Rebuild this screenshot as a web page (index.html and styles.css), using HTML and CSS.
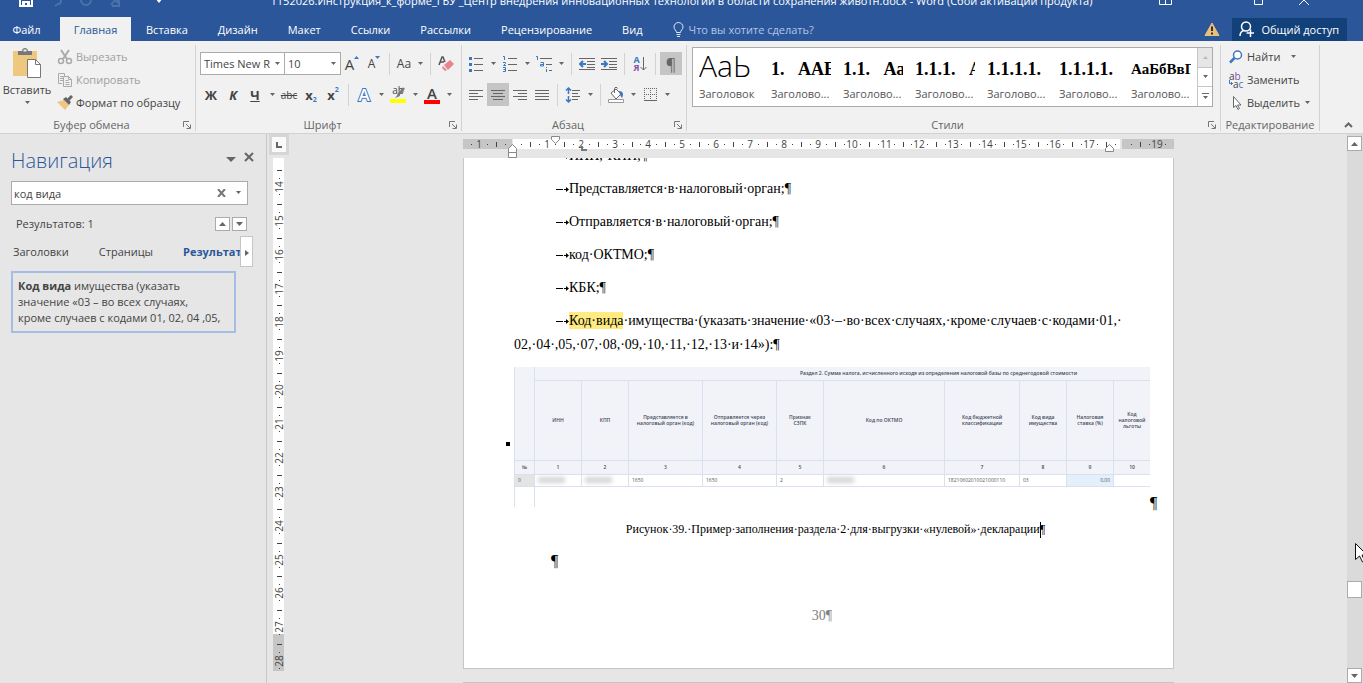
FILE: index.html
```
<!DOCTYPE html>
<html lang="ru">
<head>
  <meta charset="UTF-8" />
  <meta name="viewport" content="width=device-width, initial-scale=1.0"/>
  <title>Word</title>
  <link rel="stylesheet" href="styles.css">
</head>
<body>

  <!-- shared glyphs -->
  <svg class="defs" aria-hidden="true">
    <symbol id="down" viewBox="0 0 7 4"><path d="M1 0h5L3.500 3z" fill="#666"/></symbol>
    <symbol id="launch" viewBox="0 0 8 8"><path d="M.5 6V.5H6M3 3l4 4M7.500 3.500v4h-4" fill="none" stroke="#777"/></symbol>
    <symbol id="dash" viewBox="0 0 13 6"><path d="M0 3.500h7M8 3.500h3" stroke="#000"/><path d="M10 1l3 2.500L10 6z" fill="#000"/></symbol>
  </svg>

  <header>
    <div class="titlebar">
      <div class="quick">
        <svg width="14" height="14" viewBox="0 0 14 14"><path d="M1 1h12v12H1z" fill="none" stroke="#fff" stroke-width="2"/><path d="M3 8h8v5H8v-3H6v3H3z" fill="#fff"/></svg>
        <svg width="14" height="14" viewBox="0 0 14 14"><path d="M2 5h7a3 3 0 0 1 0 6l-3 2" fill="none" stroke="#4a72ad" stroke-width="2"/></svg>
        <svg width="14" height="14" viewBox="0 0 14 14"><circle cx="7" cy="7" r="5" fill="none" stroke="#4a72ad" stroke-width="2"/></svg>
        <svg width="14" height="14" viewBox="0 0 14 14"><path d="M2 12l4-5 2 2 4-4M10 8v5M3 13h8" fill="none" stroke="#4a72ad" stroke-width="2"/></svg>
        <svg width="8" height="5" viewBox="0 0 8 5"><path d="M0 0h8L4 5z" fill="#fff"/></svg>
      </div>
      <div class="doc-title">1152026.Инструкция_к_форме_ГБУ _Центр внедрения инновационных технологий в области сохранения животн.docx - Word (Сбой активации продукта)</div>
      <div class="window-buttons">
        <svg width="13" height="9" viewBox="0 0 13 9"><path d="M.5.5h12v8H.5zM6.500 4v4" fill="none" stroke="#fff"/></svg>
        <svg width="10" height="10" viewBox="0 0 10 10"><path d="M0 4h10" stroke="#fff"/></svg>
        <svg width="9" height="9" viewBox="0 0 9 9"><path d="M.5.5h8v8h-8z" fill="none" stroke="#fff"/></svg>
        <svg width="10" height="10" viewBox="0 0 10 10"><path d="M0 0l10 10M10 0L0 10" stroke="#fff"/></svg>
      </div>
    </div>

    <nav class="tabs">
      <button class="tab file">Файл</button>
      <button class="tab active">Главная</button>
      <button class="tab">Вставка</button>
      <button class="tab">Дизайн</button>
      <button class="tab">Макет</button>
      <button class="tab">Ссылки</button>
      <button class="tab">Рассылки</button>
      <button class="tab">Рецензирование</button>
      <button class="tab">Вид</button>
      <button class="tab tell-me">
        <svg width="11" height="15" viewBox="0 0 11 15"><path d="M3.500 10.500C3.500 8.500 1 7.500 1 5a4.500 4.500 0 0 1 9 0c0 2.500-2.500 3.500-2.500 5.500zM3.500 12.500h4M4 14.500h3" fill="none" stroke="#dfe8f5"/></svg>
        Что вы хотите сделать?
      </button>
      <svg class="warning" width="16" height="14" viewBox="0 0 16 14"><path d="M8 1l7 12.500H1z" fill="#e9bf7a" stroke="#e9bf7a" stroke-linejoin="round"/><path d="M8 4.500v4.500M8 10.500v2" stroke="#333" stroke-width="2"/></svg>
      <button class="share">
        <svg width="15" height="16" viewBox="0 0 15 16"><circle cx="7" cy="5.500" r="4.500" fill="none" stroke="#fff" stroke-width="1.500"/><path d="M1 15c0-3 2-5 4-5.500M7.500 12H15M11.500 8.500V16" fill="none" stroke="#fff" stroke-width="1.500"/></svg>
        Общий доступ
      </button>
    </nav>
  </header>

  <section class="ribbon">
    <div class="group clipboard">
      <div class="group-body">
        <button class="paste">
          <svg width="30" height="31" viewBox="0 0 30 31"><path d="M1 3h24v25H1z" fill="#edc87e"/><path d="M6 3h4c0-4 6-4 6 0h4v4H6z" fill="#777"/><path d="M11.500 3.500h3v-2h-3z" fill="#f1f1f1"/><path d="M15.500 11.500h8l5 5v13h-13z" fill="#fff" stroke="#777"/><path d="M23.500 11.500v5h5" fill="none" stroke="#777"/></svg>
          <span>Вставить</span>
          <svg width="7" height="4"><use href="#down"/></svg>
        </button>
        <div class="stack">
          <button class="cmd" disabled>
            <svg width="16" height="16" viewBox="0 0 16 16"><path d="M4 1l6 9M12 1L6 10" stroke="#aaa" stroke-width="2"/><circle cx="4" cy="12" r="2.500" fill="none" stroke="#aaa" stroke-width="1.500"/><circle cx="12" cy="12" r="2.500" fill="none" stroke="#aaa" stroke-width="1.500"/></svg>
            Вырезать
          </button>
          <button class="cmd" disabled>
            <svg width="16" height="16" viewBox="0 0 16 16"><path d="M1.500 1.500h6v3M5 11.500H1.500v-10M3 4.500h3M3 6.500h3M3 8.500h3M6.500 4.500h5l3 3v7h-8zM11.500 4.500v3h3M8.500 8.500h3M8.500 10.500h4M8.500 12.500h4" fill="none" stroke="#aaa"/></svg>
            Копировать
          </button>
          <button class="cmd">
            <svg width="16" height="16" viewBox="0 0 16 16"><path d="M0 7l7-2 5 5-4 5z" fill="#edc87e"/><path d="M6 4l3-2 5 5-2 3z" fill="#666"/><path d="M11 5l4-4" stroke="#666" stroke-width="3"/></svg>
            Формат по образцу
          </button>
        </div>
      </div>
      <div class="group-label"><span>Буфер обмена</span><button aria-label="Буфер обмена: параметры"><svg width="8" height="8"><use href="#launch"/></svg></button></div>
    </div>

    <div class="group font">
      <div class="group-body rows">
        <div class="row">
          <label class="combo font-name"><select aria-label="Шрифт"><option>Times New R</option></select><svg width="7" height="4"><use href="#down"/></svg></label>
          <label class="combo font-size"><select aria-label="Размер"><option>10</option></select><svg width="7" height="4"><use href="#down"/></svg></label>
          <button class="ic" aria-label="Увеличить размер"><span class="big-a">A</span><svg class="tip" width="5" height="3" viewBox="0 0 5 3"><path d="M0 3h5L2.500 0z" fill="#3b78bd"/></svg></button>
          <button class="ic" aria-label="Уменьшить размер"><span class="small-a">A</span><svg class="tip" width="5" height="3" viewBox="0 0 5 3"><path d="M0 0h5L2.500 3z" fill="#3b78bd"/></svg></button>
          <i class="sep"></i>
          <button class="ic case">Aa</button><button class="arr" aria-label="Ещё"><svg width="7" height="4"><use href="#down"/></svg></button>
          <i class="sep"></i>
          <button class="ic" aria-label="Очистить формат"><svg width="16" height="16" viewBox="0 0 16 16"><path d="M1 9l3-8h1l2 5M2 6h4" fill="none" stroke="#555" stroke-width="1.500"/><path d="M6 9l6-5 4 4-6 6z" fill="#e8848f"/><path d="M5 10l4 4-2 1-3-3z" fill="#e8848f"/></svg></button>
        </div>
        <div class="row">
          <button class="ic bold">Ж</button>
          <button class="ic bold italic">К</button>
          <button class="ic bold under">Ч</button><button class="arr" aria-label="Ещё"><svg width="7" height="4"><use href="#down"/></svg></button>
          <button class="ic strike">abc</button>
          <button class="ic bold">x<sub>2</sub></button>
          <button class="ic bold">x<sup>2</sup></button>
          <i class="sep"></i>
          <button class="ic effects">A</button><button class="arr" aria-label="Ещё"><svg width="7" height="4"><use href="#down"/></svg></button>
          <button class="ic mark" aria-label="Цвет выделения"><span>ab</span><svg width="16" height="16" viewBox="0 0 16 16"><path d="M14 1L8 8" stroke="#777" stroke-width="2.500"/><path d="M9 6l-4 5 5-2z" fill="#777"/><path d="M0 12h16v4H0z" fill="#ff0"/></svg></button><button class="arr" aria-label="Ещё"><svg width="7" height="4"><use href="#down"/></svg></button>
          <button class="ic color">A</button><button class="arr" aria-label="Ещё"><svg width="7" height="4"><use href="#down"/></svg></button>
        </div>
      </div>
      <div class="group-label"><span>Шрифт</span><button aria-label="Шрифт: параметры"><svg width="8" height="8"><use href="#launch"/></svg></button></div>
    </div>

    <div class="group paragraph">
      <div class="group-body rows">
        <div class="row">
          <button class="ic" aria-label="Маркеры"><svg width="14" height="16" viewBox="0 0 14 16"><path d="M0 1h3v3H0zM0 7h3v3H0zM0 13h3v3H0z" fill="#3b78bd"/><path d="M5 2.500h9M5 8.500h9M5 14.500h9" stroke="#666"/></svg></button><button class="arr" aria-label="Ещё"><svg width="7" height="4"><use href="#down"/></svg></button>
          <button class="ic" aria-label="Нумерация"><svg width="14" height="16" viewBox="0 0 14 16"><path d="M0 .5h1.500V4M0 6.500h2.500v1L.5 9.500H3M0 11.500h2.500v4H0M.5 13.500h2" fill="none" stroke="#3b78bd"/><path d="M5 2.500h9M5 8.500h9M5 14.500h9" stroke="#666"/></svg></button><button class="arr" aria-label="Ещё"><svg width="7" height="4"><use href="#down"/></svg></button>
          <button class="ic" aria-label="Многоуровневый список"><svg width="16" height="16" viewBox="0 0 16 16"><path d="M0 .5h1.500V4M4.500 6.500h3V10h-3V8.500h3M10.500 11v1M10.500 13v3" fill="none" stroke="#3b78bd"/><path d="M4 2.500h12M10 8.500h6M13 14.500h3" stroke="#666"/></svg></button><button class="arr" aria-label="Ещё"><svg width="7" height="4"><use href="#down"/></svg></button>
          <i class="sep"></i>
          <button class="ic" aria-label="Уменьшить отступ"><svg width="16" height="14" viewBox="0 0 16 14"><path d="M0 1.500h16M8 4.500h8M8 7.500h8M8 10.500h8M0 12.500h16" stroke="#666"/><path d="M7 7H1M4 4L1 7l3 3" fill="none" stroke="#3b78bd" stroke-width="2"/></svg></button>
          <button class="ic" aria-label="Увеличить отступ"><svg width="16" height="14" viewBox="0 0 16 14"><path d="M0 1.500h16M8 4.500h8M8 7.500h8M8 10.500h8M0 12.500h16" stroke="#666"/><path d="M0 7h6M3 4l3 3-3 3" fill="none" stroke="#3b78bd" stroke-width="2"/></svg></button>
          <i class="sep"></i>
          <button class="ic sort" aria-label="Сортировка"><span><b>А</b><b>Я</b></span><svg width="7" height="16" viewBox="0 0 7 16"><path d="M3.500 1v13M.5 11l3 3 3-3" fill="none" stroke="#666"/></svg></button>
          <i class="sep"></i>
          <button class="ic on pilcrow">¶</button>
        </div>
        <div class="row">
          <button class="ic" aria-label="По левому краю"><svg width="14" height="12" viewBox="0 0 14 12"><path d="M0 1.500h14M0 4.500h9M0 7.500h14M0 10.500h9" stroke="#666"/></svg></button>
          <button class="ic on" aria-label="По центру"><svg width="14" height="12" viewBox="0 0 14 12"><path d="M0 1.500h14M2 4.500h10M0 7.500h14M2 10.500h10" stroke="#666"/></svg></button>
          <button class="ic" aria-label="По правому краю"><svg width="14" height="12" viewBox="0 0 14 12"><path d="M0 1.500h14M5 4.500h9M0 7.500h14M5 10.500h9" stroke="#666"/></svg></button>
          <button class="ic" aria-label="По ширине"><svg width="14" height="12" viewBox="0 0 14 12"><path d="M0 1.500h14M0 4.500h14M0 7.500h14M0 10.500h14" stroke="#666"/></svg></button>
          <i class="sep"></i>
          <button class="ic" aria-label="Интервал"><svg width="16" height="16" viewBox="0 0 16 16"><path d="M3.500 1v6M1 3.500L3.500 1 6 3.500M3.500 9v6M1 12.500L3.500 15 6 12.500" fill="none" stroke="#3b78bd" stroke-width="1.500"/><path d="M7 3.500h8M7 6.500h6M7 9.500h8M7 12.500h6" stroke="#666"/></svg></button><button class="arr" aria-label="Ещё"><svg width="7" height="4"><use href="#down"/></svg></button>
          <i class="sep"></i>
          <button class="ic" aria-label="Заливка"><svg width="18" height="16" viewBox="0 0 18 16"><path d="M4 6l5-4 5 5-5 5z" fill="#fff" stroke="#666"/><path d="M7.500 6V1.500c0-1.500 3-1.500 3 0" fill="none" stroke="#666"/><path d="M12 4c4 0 5 3 3 7l-2-3z" fill="#3b78bd"/><path d="M1.500 12.500h15v3h-15z" fill="#fff" stroke="#999"/></svg></button><button class="arr" aria-label="Ещё"><svg width="7" height="4"><use href="#down"/></svg></button>
          <button class="ic" aria-label="Границы"><svg width="13" height="14" viewBox="0 0 13 14"><path d="M0 .5h13M0 6.500h13M.5 0v12M6.500 0v12M12.500 0v12" stroke="#666" stroke-dasharray="1 1"/><path d="M0 12.500h13" stroke="#666"/></svg></button><button class="arr" aria-label="Ещё"><svg width="7" height="4"><use href="#down"/></svg></button>
        </div>
      </div>
      <div class="group-label"><span>Абзац</span><button aria-label="Абзац: параметры"><svg width="8" height="8"><use href="#launch"/></svg></button></div>
    </div>

    <div class="group styles">
      <div class="group-body">
        <div class="gallery">
          <div class="gallery-items">
            <button class="style"><span class="sample light">АаЬ</span><span>Заголовок</span></button>
            <button class="style"><span class="sample">1.&nbsp;&nbsp; ААБ</span><span>Заголово...</span></button>
            <button class="style"><span class="sample">1.1.&nbsp;&nbsp; Аа</span><span>Заголово...</span></button>
            <button class="style"><span class="sample">1.1.1.&nbsp;&nbsp; А</span><span>Заголово...</span></button>
            <button class="style"><span class="sample">1.1.1.1.</span><span>Заголово...</span></button>
            <button class="style"><span class="sample">1.1.1.1.</span><span>Заголово...</span></button>
            <button class="style"><span class="sample normal">АаБбВвГ</span><span>Заголово...</span></button>
          </div>
          <div class="gallery-scroll">
            <button disabled aria-label="Вверх"><svg width="5" height="3" viewBox="0 0 5 3"><path d="M0 3h5L2.500 0z" fill="#bbb"/></svg></button>
            <button aria-label="Вниз"><svg width="7" height="4"><use href="#down"/></svg></button>
            <button aria-label="Все стили"><svg width="7" height="7" viewBox="0 0 7 7"><path d="M0 .5h7" stroke="#666"/><path d="M1 3h5L3.500 6z" fill="#666"/></svg></button>
          </div>
        </div>
      </div>
      <div class="group-label"><span>Стили</span><button aria-label="Стили: параметры"><svg width="8" height="8"><use href="#launch"/></svg></button></div>
    </div>

    <div class="group editing">
      <div class="group-body stack">
        <button class="cmd">
          <svg width="14" height="14" viewBox="0 0 14 14"><circle cx="8.500" cy="5" r="4" fill="#fff" stroke="#3b78bd" stroke-width="1.500"/><path d="M5.500 8L1 12.500" stroke="#3b78bd" stroke-width="2.500"/></svg>
          Найти <svg class="far" width="7" height="4"><use href="#down"/></svg>
        </button>
        <button class="cmd">
          <span class="replace"><span>a<b>b</b></span><span><svg width="4" height="6" viewBox="0 0 4 6"><path d="M.5 0v3.500H4M2 2l1.500 1.500L2 5" fill="none" stroke="#3b78bd"/></svg>a<em>c</em></span></span>
          Заменить
        </button>
        <button class="cmd">
          <svg width="14" height="14" viewBox="0 0 14 14"><path d="M4.500.5v11l2.500-2 2 4 1.500-1-2-3.500H12z" fill="#fff" stroke="#666"/></svg>
          Выделить<svg width="7" height="4"><use href="#down"/></svg>
        </button>
      </div>
      <div class="group-label"><span>Редактирование</span></div>
    </div>

    <button class="collapse" aria-label="Свернуть ленту"><svg width="9" height="6" viewBox="0 0 9 6"><path d="M1 5l3.500-3.500L8 5" fill="none" stroke="#666" stroke-width="2"/></svg></button>
  </section>

  <main>
    <aside class="navigation">
      <div class="nav-head">
        <h2>Навигация</h2>
        <button aria-label="Параметры"><svg width="10" height="5" viewBox="0 0 10 5"><path d="M0 0h10L5 5z" fill="#666"/></svg></button>
        <button aria-label="Закрыть"><svg width="10" height="10" viewBox="0 0 10 10"><path d="M1 1l8 8M9 1L1 9" stroke="#666" stroke-width="2"/></svg></button>
      </div>
      <div class="search">
        <input type="text" aria-label="Поиск в документе" value="код вида">
        <button aria-label="Очистить"><svg width="9" height="8" viewBox="0 0 9 8"><path d="M1 0l7 8M8 0L1 8" stroke="#777" stroke-width="2"/></svg></button>
        <button aria-label="Параметры поиска"><svg width="7" height="4"><use href="#down"/></svg></button>
      </div>
      <div class="results">
        <span>Результатов: 1</span>
        <button aria-label="Предыдущий"><svg width="7" height="4" viewBox="0 0 7 4"><path d="M0 4h7L3.500 0z" fill="#666"/></svg></button>
        <button aria-label="Следующий"><svg width="7" height="4" viewBox="0 0 7 4"><path d="M0 0h7L3.500 4z" fill="#666"/></svg></button>
      </div>
      <div class="nav-tabs">
        <button>Заголовки</button>
        <button>Страницы</button>
        <button class="current">Результаты</button>
        <button class="more" aria-label="Далее"><svg width="4" height="6" viewBox="0 0 4 6"><path d="M0 0v6l4-3z" fill="#666"/></svg></button>
      </div>
      <a class="hit" href="#hit"><b>Код вида</b> имущества (указать<br>значение «03 – во всех случаях,<br>кроме случаев с кодами 01, 02, 04 ,05,</a>
    </aside>

    <div class="v-ruler">
      <button class="tab-kind" aria-label="Табуляция"><svg width="6" height="6" viewBox="0 0 6 6"><path d="M1 0v5h5" fill="none" stroke="#666" stroke-width="2"/></svg></button>
      <svg id="vRuler" width="11" height="513"></svg>
    </div>

    <div class="document">
      <div class="h-ruler">
        <svg id="hRuler" width="711" height="24"></svg>
      </div>
      <div class="pages">
        <article class="page">
          <p class="item"><svg class="dash" width="13" height="6"><use href="#dash"/></svg>ИНН,·КПП;¶</p>
          <p class="item"><svg class="dash" width="13" height="6"><use href="#dash"/></svg>Представляется·в·налоговый·орган;¶</p>
          <p class="item"><svg class="dash" width="13" height="6"><use href="#dash"/></svg>Отправляется·в·налоговый·орган;¶</p>
          <p class="item"><svg class="dash" width="13" height="6"><use href="#dash"/></svg>код·ОКТМО;¶</p>
          <p class="item"><svg class="dash" width="13" height="6"><use href="#dash"/></svg>КБК;¶</p>
          <p class="item" id="hit"><svg class="dash" width="13" height="6"><use href="#dash"/></svg><mark>Код·вида</mark>·имущества·(указать·значение·«03·–·во·всех·случаях,·кроме·случаев·с·кодами·01,·<br>02,·04·,05,·07,·08,·09,·10,·11,·12,·13·и·14»):¶</p>

          <div class="figure">
            <i class="anchor"></i>
            <table>
              <colgroup>
                <col class="c20"><col class="c47"><col class="c47"><col class="c74"><col class="c74"><col class="c47"><col class="c121"><col class="c75"><col class="c47"><col class="c47"><col>
              </colgroup>
              <thead>
                <tr class="top"><th rowspan="2"></th><th colspan="10">Раздел 2. Сумма налога, исчисленного исходя из определения налоговой базы по среднегодовой стоимости</th></tr>
                <tr class="names"><th>ИНН</th><th>КПП</th><th>Представляется в<br>налоговый орган (код)</th><th>Отправляется через<br>налоговый орган (код)</th><th>Признак<br>СЗПК</th><th>Код по ОКТМО</th><th>Код бюджетной<br>классификации</th><th>Код вида<br>имущества</th><th>Налоговая<br>ставка (%)</th><th>Код<br>налоговой<br>льготы</th></tr>
                <tr class="nums"><th>№</th><th>1</th><th>2</th><th>3</th><th>4</th><th>5</th><th>6</th><th>7</th><th>8</th><th>9</th><th>10</th></tr>
              </thead>
              <tbody>
                <tr><td class="index">0</td><td><i class="smudge"></i></td><td><i class="smudge"></i></td><td>1650</td><td>1650</td><td>2</td><td><i class="smudge"></i></td><td>18210602010021000110</td><td>03</td><td class="rate">0,00</td><td></td></tr>
                <tr class="rest"><td></td><td colspan="10"></td></tr>
              </tbody>
            </table>
            <span>¶</span>
          </div>

          <p class="caption">Рисунок·39.·Пример·заполнения·раздела·2·для·выгрузки·«нулевой»·декларации<i class="caret"></i>¶</p>
          <p class="blank">¶</p>
          <footer>30¶</footer>
        </article>
        <article class="page next"></article>
      </div>
    </div>

    <div class="scrollbar">
      <button aria-label="Вверх"><svg width="7" height="4" viewBox="0 0 7 4"><path d="M0 4h7L3.500 0z" fill="#666"/></svg></button>
      <div class="before"></div>
      <button class="thumb" aria-label="Прокрутка"></button>
      <div class="after"></div>
      <button aria-label="Вниз"><svg width="7" height="4" viewBox="0 0 7 4"><path d="M0 0h7L3.500 4z" fill="#666"/></svg></button>
    </div>
  </main>

  <svg class="pointer" width="12" height="20" viewBox="0 0 12 20"><path d="M.5.5v16l4-3.500 3 6 2-1-2.500-6H12z" fill="#fff" stroke="#111"/></svg>

  <script>
    const CM = 33.87;

    // one centimetre of marks: number, two dots, half tick
    function marks(n, at, hidden) {
      const x = Math.round(at);
      const dot = Math.round(CM / 4);
      const half = Math.round(CM / 2);
      let out = hidden ? "" : `<text x="${x}" y="0">${Math.abs(n)}</text>`;
      out += `<path d="M${x - dot} -3.500h1M${x + dot} -3.500h1" stroke-width="1"/>`;
      out += `<path d="M${x + half}.5 -6v5"/>`;
      return out;
    }

    function drawHorizontal() {
      let html = `<rect x="0" y="5" width="49" height="10" fill="#c6c6c6"/>
        <rect x="50" y="5" width="607" height="10" fill="#fff"/>
        <rect x="659" y="5" width="52" height="10" fill="#c6c6c6"/>
        <g transform="translate(0 14)">`;
      for (let n = -2; n <= 19; n++) {
        html += marks(n, 50 + n * CM, n === 0 || n === 18 || n === -2);
      }
      html += `</g>
        <path d="M88.500 2.500h8v3l-4 4-4-4z" fill="#fff" stroke="#888"/>
        <path d="M45.500 18.500v-4l4-4 4 4v4zM45.500 18.500h8v5h-8z" fill="#fff" stroke="#888"/>
        <path d="M642.500 17.500v-3l4-4 4 4v3z" fill="#fff" stroke="#888"/>
        <path d="M119 12v4h5" fill="none" stroke="#777" stroke-width="2"/>`;
      document.getElementById("hRuler").innerHTML = html;
    }

    function drawVertical() {
      let html = `<rect width="11" height="476" fill="#fff"/>
        <rect y="476" width="11" height="37" fill="#c6c6c6"/>
        <g transform="translate(10 0) rotate(-90)">`;
      for (let n = 14; n <= 28; n++) {
        html += marks(n, -(29 + (n - 14) * CM));
      }
      html += "</g>";
      document.getElementById("vRuler").innerHTML = html;
    }

    drawHorizontal();
    drawVertical();
  </script>
</body>
</html>
```
FILE: styles.css
```
* {
  box-sizing: border-box;
}

body {
  margin: 0;
  height: 100vh;
  display: flex;
  flex-direction: column;
  overflow: hidden;
  font-family: "Open Sans", "Segoe UI", sans-serif;
  font-size: 11px;
  color: #444;
  background: #e6e6e6;
}

button, input, select {
  margin: 0;
  padding: 0;
  border: none;
  background: none;
  font: inherit;
  color: inherit;
}

svg {
  flex: none;
}

.defs {
  position: absolute;
  width: 0;
  height: 0;
}

/* title and tabs */

header {
  background: #2b579a;
  color: white;
}

.titlebar {
  display: grid;
  grid-template-columns: 1fr auto 1fr;
  align-items: center;
  height: 32px;
  margin-top: -15px;
  padding-bottom: 2px;
}

.quick, .window-buttons {
  display: flex;
  align-items: center;
  gap: 16px;
  padding-left: 19px;
}

.quick svg:last-child {
  margin-left: 16px;
}

.window-buttons {
  justify-content: flex-end;
  gap: 36px;
  padding: 0 54px 0 0;
}

.doc-title {
  white-space: nowrap;
}

.tabs {
  display: flex;
  align-items: center;
  height: 24px;
}

.tab {
  height: 24px;
  padding: 0 15px;
  white-space: nowrap;
}

.tab.file {
  width: 60px;
  padding: 0 7px 0 0;
}

.tab.active {
  width: 71px;
  padding: 0;
  background: #f1f1f1;
  color: #2b579a;
}

.tell-me {
  display: flex;
  align-items: center;
  gap: 5px;
  color: #b3c6e5;
}

.warning {
  margin-left: auto;
  margin-right: 12px;
}

.share {
  display: flex;
  align-items: center;
  gap: 7px;
  height: 23px;
  margin-right: 16px;
  padding: 0 8px 0 7px;
  background: #124078;
}

/* ribbon */

.ribbon {
  display: flex;
  height: 93px;
  padding-top: 4px;
  background: #f1f1f1;
  border-bottom: 1px solid #d2d2d2;
}

.group {
  display: flex;
  flex: none;
  flex-direction: column;
  margin-bottom: 2px;
  border-right: 1px solid #d2d2d2;
}

.group-body {
  flex: 1;
}

.group-label {
  display: flex;
  align-items: center;
  height: 12px;
  line-height: 12px;
  color: #666;
}

.group-label span {
  flex: 1;
  text-align: center;
}

.group-label button {
  display: flex;
  width: 12px;
}

.clipboard {
  width: 196px;
}

.clipboard .group-body {
  display: flex;
  gap: 3px;
}

.font {
  width: 266px;
}

.paragraph {
  width: 225px;
}

.paste {
  display: flex;
  flex-direction: column;
  align-items: center;
  gap: 3px;
  width: 54px;
  padding-top: 3px;
}

.paste span {
  line-height: 16px;
}

.stack {
  display: flex;
  flex-direction: column;
}

.cmd {
  display: flex;
  align-items: center;
  gap: 3px;
  height: 23px;
  white-space: nowrap;
}

.cmd:disabled {
  color: #a0a0a0;
}

.rows {
  display: flex;
  flex-direction: column;
  gap: 8px;
  padding: 7px 3px 0;
}

.font .rows {
  padding-left: 4px;
}

.row {
  display: flex;
  align-items: center;
  height: 23px;
}

.combo {
  display: flex;
  align-items: center;
  height: 23px;
  padding: 0 3px;
  background: white;
  border: 1px solid #ababab;
}

.font-name {
  width: 85px;
}

.font-size {
  width: 56px;
  border-left: none;
}

.combo select {
  flex: 1;
  min-width: 0;
  appearance: none;
  text-overflow: clip;
}

.ic {
  display: flex;
  align-items: center;
  justify-content: center;
  width: 22px;
  height: 23px;
}

.ic.on {
  background: #c5c5c5;
}

.ic.pilcrow {
  font-size: 16px;
  color: #666;
}

.arr {
  display: flex;
  align-items: center;
  justify-content: center;
  width: 12px;
  height: 23px;
}

.sep {
  width: 1px;
  height: 22px;
  margin: 0 4px;
  background: #d2d2d2;
}

.big-a {
  font-size: 15px;
}

.small-a {
  font-size: 12px;
}

.tip {
  align-self: flex-start;
  margin-top: 4px;
}

.case {
  width: 20px;
  font-size: 12px;
}

.bold {
  font-size: 13px;
  font-weight: bold;
}

.italic {
  font-style: italic;
}

.under {
  text-decoration: underline;
}

.strike {
  font-size: 10px;
  text-decoration: line-through;
}

.ic sub, .ic sup {
  font-size: 7px;
  color: #3b78bd;
}

.ic sub {
  align-self: flex-end;
  padding-bottom: 2px;
}

.ic sup {
  align-self: flex-start;
  padding-top: 2px;
}

.effects {
  font-size: 17px;
  font-weight: 600;
  color: white;
  -webkit-text-stroke: 2px #3b78bd;
  paint-order: stroke;
}

.mark {
  display: grid;
}

.mark span, .mark svg {
  grid-area: 1 / 1;
}

.mark span {
  align-self: start;
  font-size: 10px;
}

.color {
  width: 16px;
  height: 18px;
  margin: 0 3px;
  font-size: 15px;
  font-weight: 600;
  line-height: 14px;
  align-items: flex-start;
  border-bottom: 4px solid red;
}

.sort span {
  display: flex;
  flex-direction: column;
  font-size: 9px;
  line-height: 8px;
  color: #3b78bd;
}

.sort b + b {
  color: #8a4fa8;
}

.styles {
  flex: 1;
  min-width: 0;
}

.styles .group-body {
  padding: 2px 7px 0 5px;
}

.gallery {
  display: flex;
  height: 60px;
  background: white;
  border: 1px solid #ababab;
}

.gallery-items {
  display: flex;
  flex: 1;
  overflow: hidden;
}

.style {
  display: flex;
  flex-direction: column;
  flex: none;
  width: 72px;
  padding: 0 6px;
  color: #555;
  text-align: left;
  white-space: nowrap;
}

.sample {
  width: 60px;
  height: 38px;
  overflow: hidden;
  font: bold 18px/42px "Liberation Serif", serif;
  color: black;
}

.sample.light {
  font: 300 30px/36px "Open Sans", sans-serif;
}

.sample.normal {
  font-size: 15px;
}

.gallery-scroll {
  display: flex;
  flex-direction: column;
  width: 15px;
  border-left: 1px solid #c6c6c6;
}

.gallery-scroll button {
  display: flex;
  flex: 1;
  align-items: center;
  justify-content: center;
}

.gallery-scroll button + button {
  border-top: 1px solid #c6c6c6;
}

.gallery-scroll button:disabled {
  background: #e6e6e6;
}

.editing {
  width: 99px;
}

.editing .cmd {
  gap: 4px;
  padding: 0 0 0 8px;
}

.far {
  margin-left: 6px;
}

.replace {
  width: 14px;
  font-size: 10px;
  line-height: 8px;
}

.replace span {
  display: flex;
}

.replace b {
  color: #8a4fa8;
  font-weight: normal;
}

.replace em {
  color: #3b78bd;
  font-style: normal;
}

.collapse {
  align-self: flex-end;
  width: 43px;
  height: 20px;
  padding-left: 14px;
}

/* navigation pane */

main {
  display: flex;
  flex: 1;
  min-height: 0;
}

.navigation {
  display: flex;
  flex-direction: column;
  width: 267px;
  padding: 12px 12px 0 11px;
  border-right: 1px solid #c6c6c6;
}

.nav-head {
  display: flex;
  gap: 8px;
  height: 35px;
}

.nav-head h2 {
  flex: 1;
  margin: 0;
  font-size: 20px;
  font-weight: 300;
  line-height: 30px;
  color: #2b579a;
}

.nav-head button {
  height: 22px;
}

.search {
  display: flex;
  align-items: center;
  width: 237px;
  height: 24px;
  padding-left: 2px;
  background: white;
  border: 1px solid #ababab;
}

.search input {
  flex: 1;
  min-width: 0;
}

.search button {
  display: flex;
  justify-content: center;
  width: 17px;
}

.results {
  display: flex;
  align-items: center;
  gap: 2px;
  width: 236px;
  height: 31px;
  padding: 6px 0 0 5px;
}

.results span {
  flex: 1;
}

.results button {
  display: flex;
  align-items: center;
  justify-content: center;
  width: 15px;
  height: 14px;
  background: white;
  border: 1px solid #ababab;
}

.nav-tabs {
  display: flex;
  align-items: center;
  gap: 28px;
  width: 242px;
  height: 31px;
  overflow: hidden;
}

.nav-tabs button {
  height: 20px;
  padding-left: 2px;
}

.nav-tabs .current {
  flex: 1;
  min-width: 0;
  overflow: hidden;
  text-align: left;
  font-weight: bold;
  color: #2b579a;
}

.nav-tabs .more {
  width: 13px;
  height: 31px;
  margin-left: -28px;
  padding: 0;
  background: white;
  border: 1px solid #c6c6c6;
}

.hit {
  width: 225px;
  margin-top: 4px;
  padding: 5px;
  border: 2px solid #a3bde3;
  line-height: 16px;
  color: inherit;
  text-decoration: none;
  white-space: nowrap;
}

/* rulers */

.v-ruler {
  display: flex;
  flex-direction: column;
  align-items: center;
  gap: 3px;
  width: 23px;
}

.tab-kind {
  display: flex;
  align-items: center;
  justify-content: center;
  width: 20px;
  height: 21px;
  background: #fafafa;
  border: 3px solid #d6d6d6;
}

.h-ruler {
  display: flex;
  justify-content: center;
  height: 24px;
}

#hRuler, #vRuler {
  font-size: 10px;
  text-anchor: middle;
  fill: #444;
  stroke: none;
}

#hRuler g path, #vRuler g path {
  stroke: #444;
}

/* document */

.document {
  display: flex;
  flex-direction: column;
  flex: 1;
  min-width: 0;
}

.pages {
  display: flex;
  flex-direction: column;
  align-items: center;
  flex: 1;
  min-height: 0;
  overflow: hidden;
}

.page {
  flex: none;
  width: 711px;
  margin-top: -15px;
  padding: 0 53px 40px 50px;
  background: white;
  border: 1px solid #c6c6c6;
  font-family: "Liberation Serif", serif;
  font-size: 14px;
  line-height: 24px;
  color: black;
}

.page.next {
  margin-top: 13px;
}

.page p {
  margin: 0 0 9px;
  white-space: nowrap;
}

.item {
  text-indent: 42px;
}

.dash {
  vertical-align: 1px;
}

mark {
  padding: 1px 0;
  background: #ffeb80;
}

.figure {
  position: relative;
  display: flex;
  align-items: flex-end;
  width: 644px;
  margin: 10px 0;
}

.figure span {
  font-size: 16px;
  line-height: 8px;
}

.anchor {
  position: absolute;
  left: -8px;
  top: 75px;
  width: 4px;
  height: 4px;
  background: black;
}

table {
  width: 636px;
  table-layout: fixed;
  border-collapse: collapse;
  font: 5px/6px "Open Sans", sans-serif;
  color: #444a5a;
}

.c20 { width: 20px; }
.c47 { width: 47px; }
.c74 { width: 74px; }
.c75 { width: 75px; }
.c121 { width: 121px; }

th, td {
  padding: 0;
  border: 1px solid #dae1ee;
  border-width: 0 1px 1px 0;
}

tr > :last-child {
  border-right: none;
}

tr > :first-child {
  border-left: 1px solid #dae1ee;
}

th {
  background: #f2f3f8;
  font-weight: 600;
}

td {
  padding-left: 3px;
  color: #555;
}

.top { height: 13px; }
.names { height: 80px; }
.nums { height: 14px; }
tbody tr { height: 12px; }
tbody .rest { height: 21px; }

.top th + th {
  padding-left: 192px;
}

.rest td {
  border-bottom: none;
}

td.index {
  background: #e4e4e4;
}

td.rate {
  padding-right: 3px;
  text-align: right;
  background: #e3f0fc;
}

.smudge {
  display: block;
  width: 27px;
  height: 6px;
  background: #d5d5d5;
  filter: blur(2px);
}

.caption {
  font-size: 12px;
  text-align: center;
  text-indent: 37px;
}

.page .caption {
  margin-bottom: 8px;
}

.caret {
  display: inline-block;
  width: 1px;
  height: 16px;
  margin-right: -1px;
  background: black;
  vertical-align: middle;
}

.blank {
  font-size: 16px;
  text-indent: 37px;
}

.page footer {
  margin-top: 31px;
  padding-left: 10px;
  text-align: center;
  color: #808080;
}

/* scrollbar */

.scrollbar {
  display: flex;
  flex-direction: column;
  width: 16px;
  padding: 2px 1px 0 0;
  background: #dadada;
}

.scrollbar button {
  display: flex;
  align-items: center;
  justify-content: center;
  height: 15px;
  background: white;
  border: 1px solid #ababab;
}

.scrollbar .thumb {
  height: 17px;
}

.before {
  flex: 430;
}

.after {
  flex: 70;
}

.pointer {
  position: absolute;
  right: -4px;
  top: 543px;
}
```
